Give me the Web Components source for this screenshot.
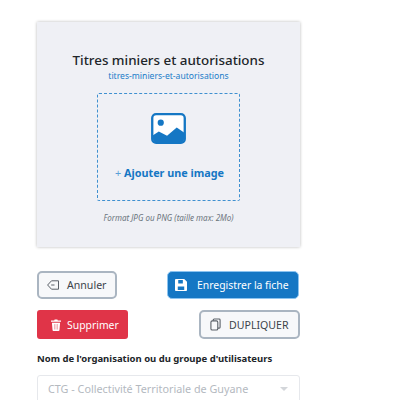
<!DOCTYPE html>
<html lang="fr">
<head>
<meta charset="utf-8">
<title>Fiche</title>
<style>
  html, body { margin: 0; height: 400px; overflow: hidden; background: #fff; }
  body { font-family: "Noto Sans", "Open Sans", sans-serif; color: #212529; }
</style>
</head>
<body>
<fiche-form></fiche-form>

<template id="tpl-upload">
  <style>
    :host { display: flex; flex-direction: column; align-items: center; box-sizing: border-box; width: 263px; height: 225px; padding-top: 29px; background: #eff0f5; box-shadow: 0 0 3px rgba(0,0,0,.28); }
    h2 { margin: 0; font-size: 13.4px; line-height: 18px; font-weight: 500; color: #212529; }
    .slug { font-size: 8.6px; line-height: 14px; color: #1a7cc9; }
    .drop { box-sizing: border-box; width: 143px; height: 108px; margin-top: 10px; border: 1px dashed #3f90d0; border-radius: 2px; display: flex; flex-direction: column; align-items: center; padding-top: 19px; }
    svg { display: block; width: 35px; height: 31px; }
    .add { margin: 21px 0 0 2px; font-size: 10.8px; line-height: 16px; font-weight: 700; color: #1577c4; }
    .add span { color: #5a9fd8; font-weight: 400; }
    .hint { margin-top: 11px; font-size: 8px; line-height: 11px; font-style: italic; color: #6c757d; }
  </style>
  <h2><slot name="title"></slot></h2>
  <div class="slug"><slot name="slug"></slot></div>
  <div class="drop">
    <svg viewBox="0 0 36 32">
      <rect x="1.2" y="1.2" width="33.6" height="29.6" rx="4" fill="#fff" stroke="#1577c4" stroke-width="2.4"/>
      <circle cx="10" cy="10" r="3.2" fill="#1577c4"/>
      <path d="M2 23 L8 19 L16.5 23.4 L26.5 15 L34 20 V27 a3 3 0 0 1 -3 3 H5 a3 3 0 0 1 -3 -3 Z" fill="#1577c4"/>
    </svg>
    <div class="add"><span>+</span> Ajouter une image</div>
  </div>
  <div class="hint"><slot name="hint"></slot></div>
</template>

<template id="tpl-btn">
  <style>
    :host { display: inline-flex; }
    button { box-sizing: border-box; display: inline-flex; align-items: center; justify-content: flex-start; gap: var(--gap, 9px); width: 100%; height: 100%; padding: 0 0 0 var(--pad, 8px); border-radius: 5px; font: 400 var(--size, 10.6px)/14px "Noto Sans", "Open Sans", sans-serif; border: 2px solid #aab5c1; background: #f7f8fa; color: #3d444b; white-space: nowrap; }
    :host([variant=primary]) button { background: #1577c4; border-color: #8cc4f0; color: #fff; border-width: 1px; }
    :host([variant=danger]) button { background: #e03448; border-color: #e03448; color: #fff; border-radius: 3px; }
    ::slotted(svg) { display: block; flex: none; }
  </style>
  <button type="button"><slot name="icon"></slot><slot></slot></button>
</template>

<template id="tpl-select">
  <style>
    :host { display: block; }
    label { display: block; font-size: 9.5px; line-height: 14px; font-weight: 700; color: #212529; margin-bottom: 9px; }
    .box { box-sizing: border-box; height: 40px; border: 1px solid #e6e8ec; border-radius: 3px; display: flex; align-items: flex-start; justify-content: space-between; padding: 5px 10px 0 10px; font-size: 10.8px; line-height: 16px; color: #b4b9bf; }
    i { width: 0; height: 0; margin: 6px 1px 0 0; border: 4px solid transparent; border-top: 4px solid #d3d6da; border-bottom: 0; }
  </style>
  <label><slot name="label"></slot></label>
  <div class="box"><slot></slot><i></i></div>
</template>

<template id="tpl-form">
  <style>
    :host { display: block; box-sizing: border-box; width: 263px; margin: 22px 0 0 37px; }
    .row { display: flex; justify-content: space-between; }
    .r1 { margin-top: 24px; height: 28px; }
    .r2 { margin-top: 11px; height: 29px; }
    .a { width: 80px; --pad: 8px; --gap: 8px; }
    .b { width: 132px; margin-right: 1px; --pad: 7px; --gap: 10px; --size: 10.4px; }
    .c { width: 91px; --pad: 12px; --gap: 6px; --size: 10.4px; }
    .d { width: 101px; --pad: 9px; --gap: 8px; }
    upload-card { display: flex; }
    field-select { margin-top: 13px; }
  </style>
  <upload-card>
    <span slot="title">Titres miniers et autorisations</span>
    <span slot="slug">titres-miniers-et-autorisations</span>
    <span slot="hint">Format JPG ou PNG (taille max: 2Mo)</span>
  </upload-card>
  <div class="row r1">
    <action-btn class="a">
      <svg slot="icon" width="12" height="10" viewBox="0 0 12 10" fill="none" stroke="#5a6068"><path d="M11.5 .8 H4.5 L.6 5 L4.5 9.2 H11.5 Z"/><path d="M7.5 5 H4.2"/></svg>
      Annuler
    </action-btn>
    <action-btn class="b" variant="primary">
      <svg slot="icon" width="12" height="12" viewBox="0 0 13 13"><path fill="#fff" fill-rule="evenodd" d="M1 0 H10 L13 3 V12 a1 1 0 0 1 -1 1 H1 a1 1 0 0 1 -1 -1 V1 a1 1 0 0 1 1 -1 Z M3.5 1.2 V4.8 H8.5 V1.2 Z M3 8 V11.8 H10 V8 Z"/></svg>
      Enregistrer la fiche
    </action-btn>
  </div>
  <div class="row r2">
    <action-btn class="c" variant="danger">
      <svg slot="icon" width="10" height="12" viewBox="0 0 11 13"><path fill="#fff" d="M0 1.5 H3.5 L4 .5 H7 L7.5 1.5 H11 V3 H0 Z M1 4 H10 L9.3 12 a1 1 0 0 1 -1 1 H2.7 a1 1 0 0 1 -1 -1 Z"/><path stroke="#e9808c" stroke-width=".7" d="M3.8 5.5 V11.5 M5.5 5.5 V11.5 M7.2 5.5 V11.5"/></svg>
      Supprimer
    </action-btn>
    <action-btn class="d">
      <svg slot="icon" width="11" height="13" viewBox="0 0 12 14" fill="none" stroke="#5a6068" stroke-width="1.2"><rect x="1" y="3" width="7.5" height="10" rx="1.5"/><path d="M3.5 3 V2 a1 1 0 0 1 1 -1 H10 a1 1 0 0 1 1 1 V10 a1 1 0 0 1 -1 1 H8.5"/></svg>
      DUPLIQUER
    </action-btn>
  </div>
  <field-select>
    <span slot="label">Nom de l'organisation ou du groupe d'utilisateurs</span>
    CTG - Collectivité Territoriale de Guyane
  </field-select>
</template>

<script>
  function tpl(name, id) {
    customElements.define(name, class extends HTMLElement {
      constructor() {
        super();
        this.attachShadow({ mode: "open" }).appendChild(document.getElementById(id).content.cloneNode(true));
      }
    });
  }
  tpl("upload-card", "tpl-upload");
  tpl("action-btn", "tpl-btn");
  tpl("field-select", "tpl-select");
  tpl("fiche-form", "tpl-form");
</script>
</body>
</html>
